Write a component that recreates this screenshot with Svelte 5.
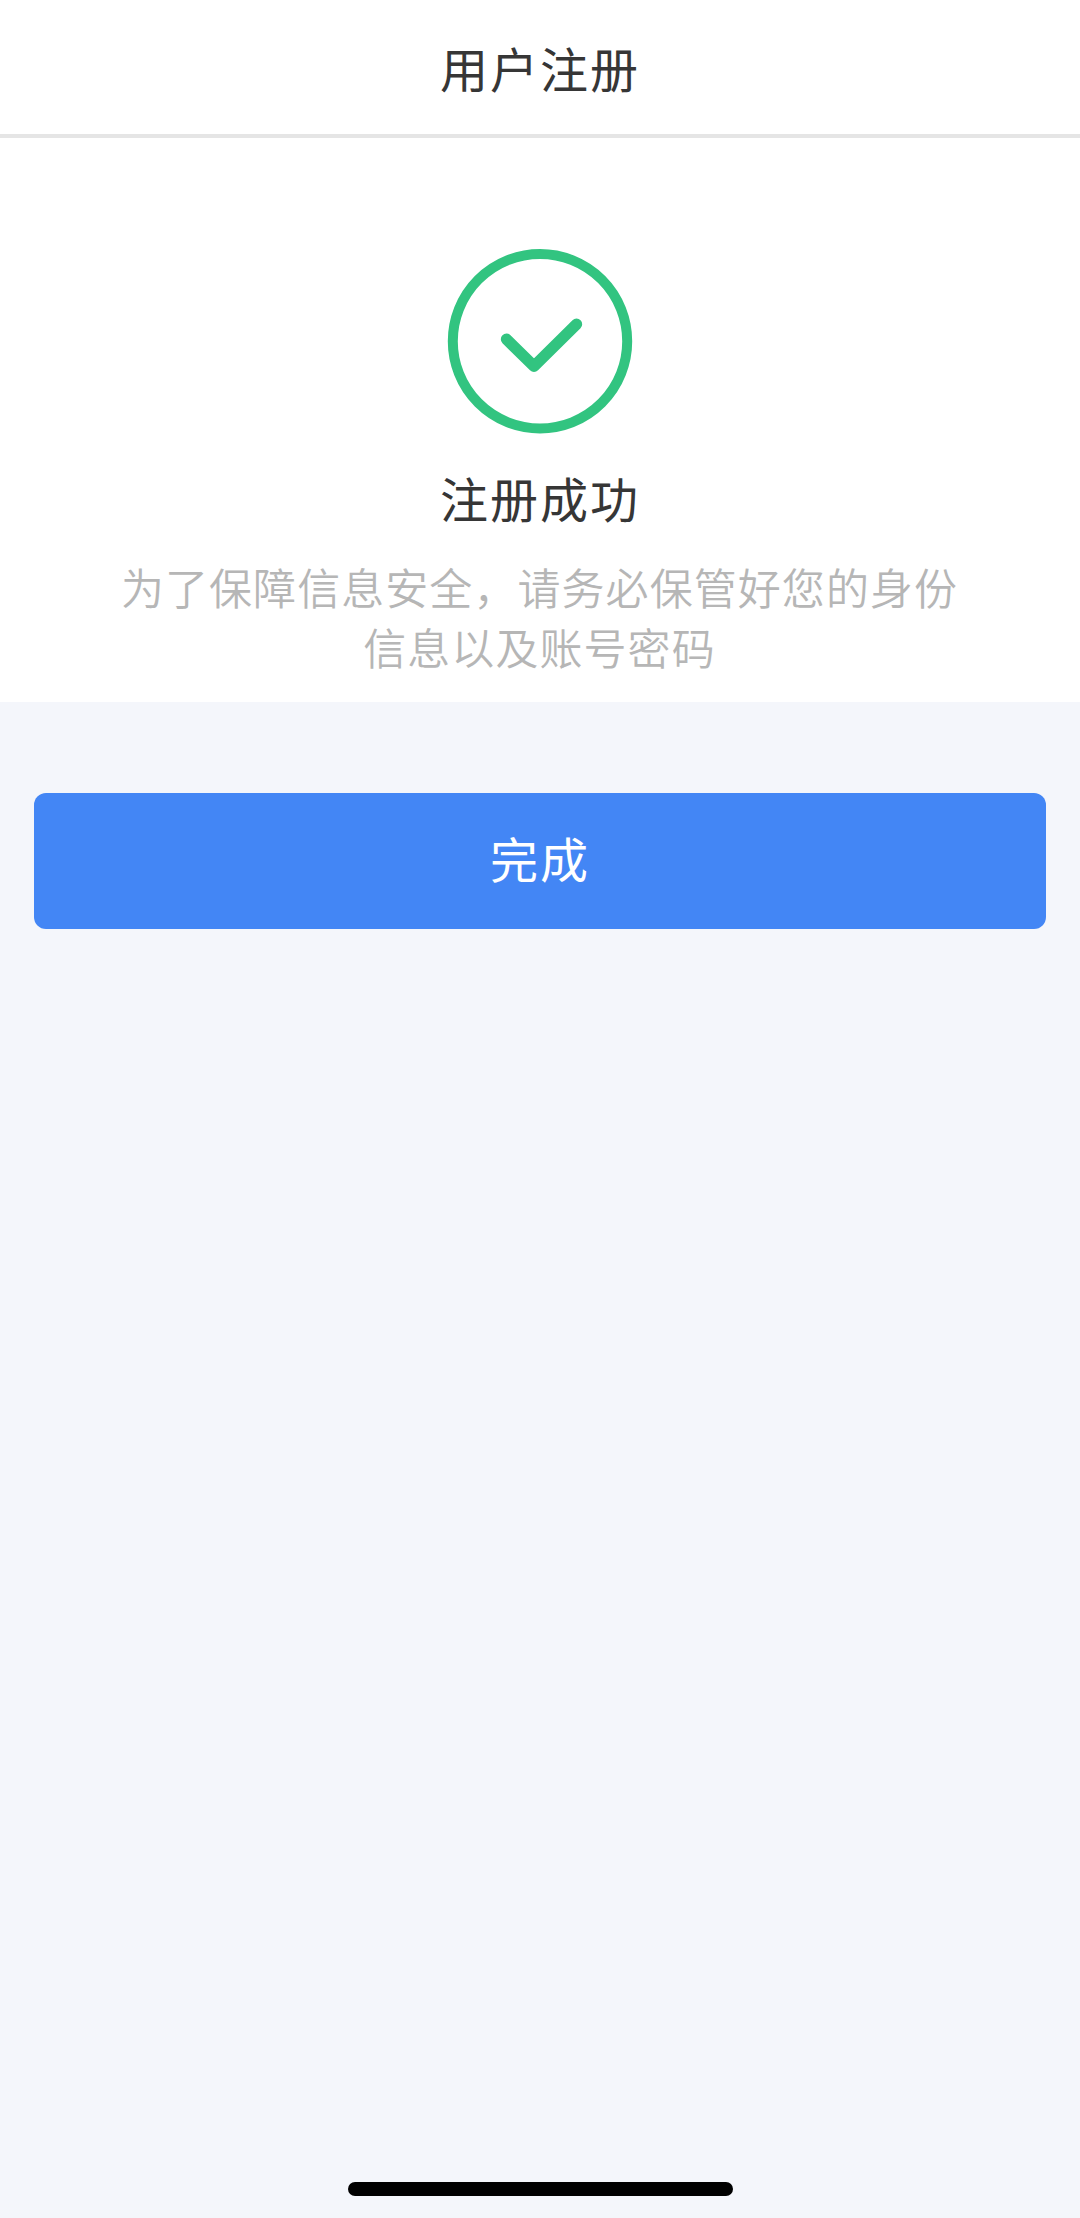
<script lang="ts">
  const title = '用户注册';
  const status = '注册成功';
  const tips = ['为了保障信息安全，请务必保管好您的身份', '信息以及账号密码'];
</script>

<div class="page">
  <header class="navbar">
    <h1>{title}</h1>
  </header>

  <section class="result">
    <svg class="result-icon" width="186" height="186" viewBox="0 0 186 186" fill="none" aria-hidden="true">
      <circle cx="93" cy="93.2" r="87.2" stroke="#32c480" stroke-width="10"/>
      <path d="M59.5 91.2L87 118.3L129.5 76.2" stroke="#32c480" stroke-width="11.4" stroke-linecap="round" stroke-linejoin="round"/>
    </svg>
    <h2>{status}</h2>
    <p>
      {#each tips as line}
        <span>{line}</span>
      {/each}
    </p>
  </section>

  <div class="actions">
    <button type="button">完成</button>
  </div>

  <div class="home-indicator"></div>
</div>

<style>
  :global(body) {
    margin: 0;
    background: #f4f6fb;
  }

  .page {
    display: flex;
    flex-direction: column;
    height: 2218px;
    background: #f4f6fb;
    font-family: "Noto Sans CJK SC", sans-serif;
  }

  /* Header */
  .navbar {
    box-sizing: border-box;
    height: 138px;
    padding-top: 31px;
    background: #fff;
    border-bottom: 4px solid #e5e5e5;
  }
  h1,
  h2 {
    margin: 0;
    font-size: 48px;
    font-weight: 400;
    line-height: 72px;
    letter-spacing: 2px;
    text-align: center;
    color: #363636;
  }

  /* Result */
  .result {
    box-sizing: border-box;
    height: 564px;
    padding-top: 110px;
    display: flex;
    flex-direction: column;
    align-items: center;
    background: #fff;
  }
  .result-icon {
    display: block;
  }
  h2 {
    margin-top: 27px;
  }
  p {
    margin: 23px 0 0;
    padding-right: 1px;
    font-size: 43px;
    font-weight: 350;
    line-height: 60px;
    letter-spacing: 1.06px;
    text-align: center;
    color: #b6b6b6;
  }
  p span {
    display: block;
    white-space: nowrap;
  }

  /* Action */
  .actions {
    padding: 91px 34px 0;
  }
  button {
    display: block;
    width: 100%;
    height: 136px;
    padding: 0 0 8px;
    border: none;
    border-radius: 12px;
    background: #4386f5;
    color: #fff;
    font-family: inherit;
    font-size: 48px;
    font-weight: 400;
    letter-spacing: 2px;
  }

  .home-indicator {
    width: 385px;
    height: 14px;
    margin: auto auto 22px;
    border-radius: 7px;
    background: #000;
  }
</style>
